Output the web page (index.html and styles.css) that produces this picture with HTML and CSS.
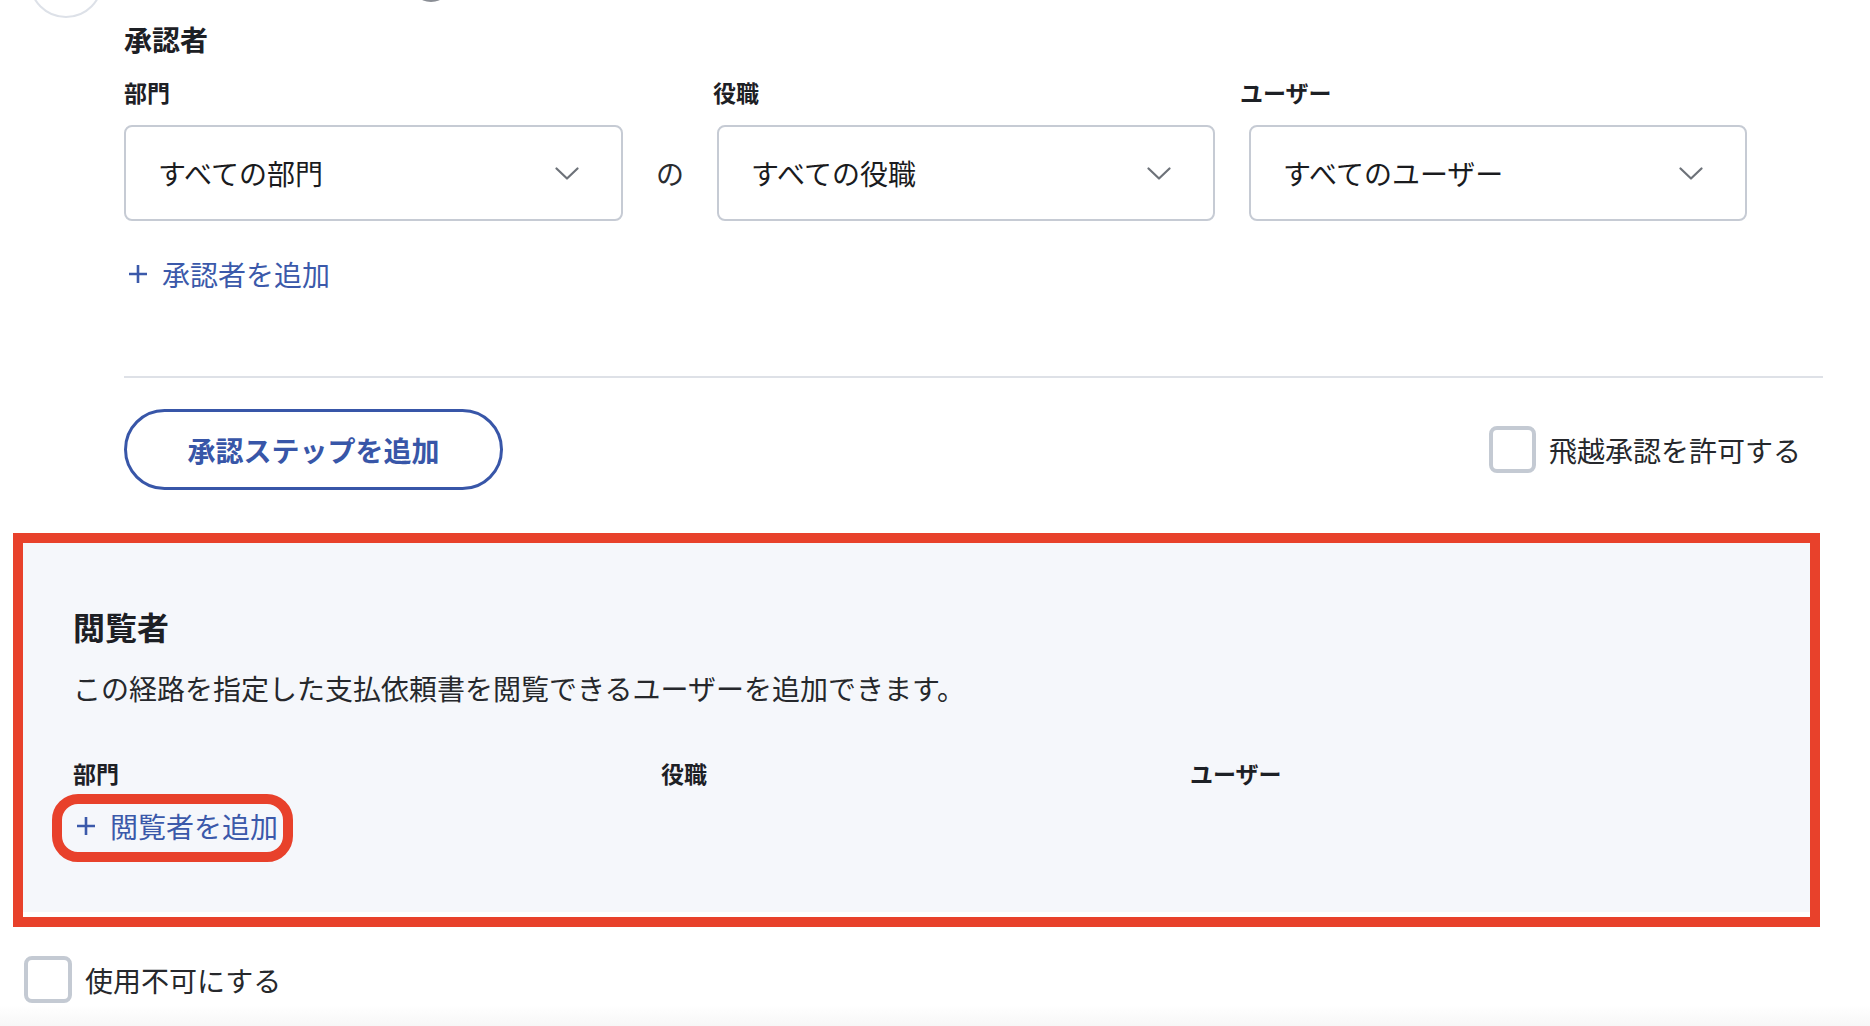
FILE: index.html
```html
<!DOCTYPE html>
<html lang="ja">
<head>
<meta charset="utf-8">
<title>承認経路</title>
<link rel="stylesheet" href="styles.css">
</head>
<body>
<div class="page">
  <div class="step-top">
    <span class="step-circle"></span>
    <span class="step-dot"></span>
  </div>

  <section class="approver">
    <h3 class="section-title">承認者</h3>
    <div class="label-row">
      <span class="field-label">部門</span>
      <span class="field-label">役職</span>
      <span class="field-label">ユーザー</span>
    </div>
    <div class="select-row">
      <div class="select select-dept">
        <span class="select-value">すべての部門</span>
        <svg class="chevron" viewBox="0 0 24 13" width="24" height="13"><path d="M1.5 1.5 L12 11.5 L22.5 1.5"/></svg>
      </div>
      <span class="connector">の</span>
      <div class="select select-role">
        <span class="select-value">すべての役職</span>
        <svg class="chevron" viewBox="0 0 24 13" width="24" height="13"><path d="M1.5 1.5 L12 11.5 L22.5 1.5"/></svg>
      </div>
      <div class="select select-user">
        <span class="select-value">すべてのユーザー</span>
        <svg class="chevron" viewBox="0 0 24 13" width="24" height="13"><path d="M1.5 1.5 L12 11.5 L22.5 1.5"/></svg>
      </div>
    </div>
    <a class="add-link approver-add">
      <svg class="plus" viewBox="0 0 20 20" width="20" height="20"><path d="M10 1 V19 M1 10 H19"/></svg>
      <span>承認者を追加</span>
    </a>
    <div class="divider"></div>
    <div class="step-actions">
      <button class="btn-outline" type="button">承認ステップを追加</button>
      <label class="check">
        <span class="check-box"></span>
        <span class="check-text">飛越承認を許可する</span>
      </label>
    </div>
  </section>

  <div class="annot-box">
    <section class="viewer-panel">
      <h3 class="viewer-title">閲覧者</h3>
      <p class="viewer-desc">この経路を指定した支払依頼書を閲覧できるユーザーを追加できます。</p>
      <div class="label-row viewer-labels">
        <span class="field-label">部門</span>
        <span class="field-label">役職</span>
        <span class="field-label">ユーザー</span>
      </div>
      <div class="annot-pill">
        <a class="add-link viewer-add">
          <svg class="plus" viewBox="0 0 20 20" width="20" height="20"><path d="M10 1 V19 M1 10 H19"/></svg>
          <span>閲覧者を追加</span>
        </a>
      </div>
    </section>
  </div>

  <label class="check bottom-check">
    <span class="check-box"></span>
    <span class="check-text">使用不可にする</span>
  </label>
  <div class="footer-shade"></div>
</div>
</body>
</html>
```

FILE: styles.css
```css
* {
  box-sizing: border-box;
}

html, body {
  margin: 0;
  padding: 0;
  background: #ffffff;
}

body {
  font-family: "Noto Sans CJK JP", "Noto Sans", sans-serif;
  color: #222428;
  overflow: hidden;
}

.page {
  width: 1870px;
  height: 1026px;
  display: flex;
  flex-direction: column;
  overflow: hidden;
}

/* top step marker (cut off) */
.step-top {
  height: 18px;
  display: flex;
  align-items: flex-end;
  flex: none;
}

.step-circle {
  width: 74px;
  height: 74px;
  flex: none;
  border: 2px solid #dde1e8;
  border-radius: 50%;
  margin-left: 29px;
}

.step-dot {
  width: 22px;
  height: 10px;
  flex: none;
  border-radius: 50%;
  background: #8a8e95;
  align-self: flex-start;
  margin-top: -8px;
  margin-left: 317px;
}

/* approver section */
.approver {
  margin-left: 124px;
  width: 1699px;
  flex: none;
}

.section-title {
  margin: 3px 0 0;
  font-size: 28px;
  line-height: 36px;
  font-weight: 700;
  color: #1d2025;
}

.label-row {
  display: grid;
  grid-template-columns: 589px 527px auto;
  margin-top: 20px;
}

.field-label {
  font-size: 23px;
  line-height: 30px;
  font-weight: 700;
  color: #1d2025;
}

.select-row {
  display: flex;
  margin-top: 18px;
}

.select {
  height: 96px;
  border: 2px solid #c6cbd4;
  border-radius: 8px;
  background: #fff;
  display: flex;
  align-items: center;
  justify-content: space-between;
  padding: 0 42px 0 32px;
  flex: none;
}

.select-dept {
  width: 499px;
}

.select-role {
  width: 498px;
  margin-right: 34px;
}

.select-user {
  width: 498px;
}

.select-value {
  font-size: 28px;
  line-height: 40px;
  color: #1a1b1e;
}

.chevron {
  flex: none;
  fill: none;
  stroke: #6d7279;
  stroke-width: 2.2;
  stroke-linecap: round;
  stroke-linejoin: round;
}

.connector {
  width: 94px;
  flex: none;
  display: flex;
  align-items: center;
  justify-content: center;
  font-size: 28px;
  color: #2a2c30;
}

.add-link {
  display: inline-flex;
  align-items: center;
  gap: 14px;
  font-size: 28px;
  line-height: 40px;
  color: #3b59aa;
  text-decoration: none;
  cursor: pointer;
}

.plus {
  flex: none;
  fill: none;
  stroke: #3b59aa;
  stroke-width: 2.6;
}

.approver-add {
  margin-top: 33px;
  margin-left: 4px;
}

.divider {
  height: 2px;
  background: #dee1e7;
  margin-top: 82px;
}

.step-actions {
  display: flex;
  align-items: center;
  justify-content: space-between;
  margin-top: 31px;
  padding-right: 22px;
}

.btn-outline {
  width: 379px;
  height: 81px;
  border: 3px solid #3856a8;
  border-radius: 41px;
  background: #fff;
  color: #3856a8;
  font-family: inherit;
  font-size: 28px;
  font-weight: 700;
  padding: 0;
  cursor: pointer;
}

.check {
  display: flex;
  align-items: center;
  gap: 13px;
}

.check-box {
  width: 47px;
  height: 47px;
  flex: none;
  border: 4px solid #c4cad3;
  border-radius: 8px;
  background: #fff;
}

.check-text {
  font-size: 28px;
  line-height: 40px;
  color: #26282c;
}

/* viewer panel with red annotation */
.annot-box {
  margin: 43px 0 0 13px;
  width: 1807px;
  border: 10px solid #e8412b;
  background: #fff;
  flex: none;
}

.viewer-panel {
  background: #f5f7fb;
  padding: 61px 0 50px 50px;
  margin-bottom: 5px;
}

.viewer-title {
  margin: 0;
  font-size: 32px;
  line-height: 44px;
  font-weight: 700;
  color: #1d2025;
}

.viewer-desc {
  margin: 20px 0 0;
  font-size: 28px;
  line-height: 40px;
  color: #26282c;
}

.viewer-labels {
  grid-template-columns: 588px 529px auto;
  margin-top: 50px;
}

.annot-pill {
  display: inline-flex;
  margin: 6px 0 0 -21px;
  border: 10px solid #e8412b;
  border-radius: 26px;
  padding: 2px 5px 6px 14px;
}

/* bottom */
.bottom-check {
  margin: 29px 0 0 24px;
  flex: none;
}

.bottom-check .check-box {
  width: 48px;
  height: 47px;
}

.footer-shade {
  flex: 1;
  margin-top: 2px;
  background: linear-gradient(#ffffff, #f7f7f7);
}
```
